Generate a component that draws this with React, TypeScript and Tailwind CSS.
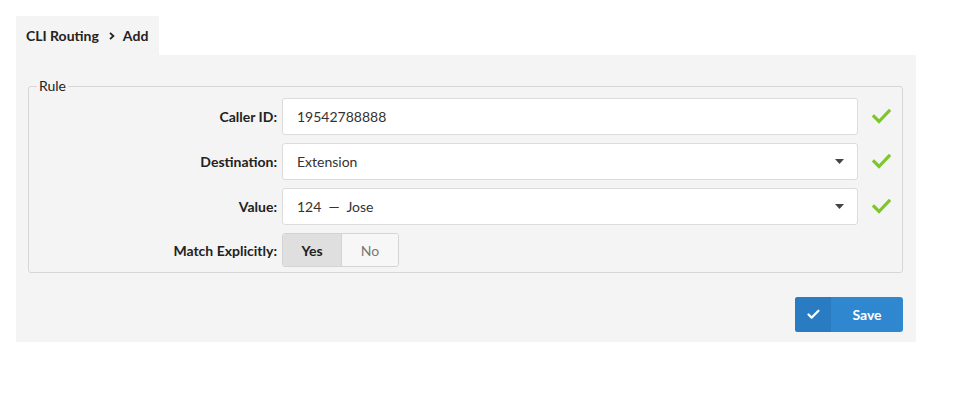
import { Check } from "lucide-react";

const font = { fontFamily: "Lato, 'Open Sans', sans-serif" };

function Caret() {
  return (
    <svg width="9" height="5" viewBox="0 0 9 5" className="absolute right-[13px] top-[15px]">
      <path d="M0 0 L9 0 L4.5 5 Z" fill="#444" />
    </svg>
  );
}

function Tick() {
  return (
    <svg width="19" height="15" viewBox="0 0 19 15" className="ml-[14px] shrink-0">
      <path d="M2 7.5 L7 12.5 L17 2" fill="none" stroke="#7dc72c" strokeWidth="3.2" strokeLinecap="square" />
    </svg>
  );
}

function Row({ label, children, tick = true }: { label: string; children: React.ReactNode; tick?: boolean }) {
  return (
    <div className="flex items-center">
      <div className="w-[248px] shrink-0 text-right text-[14px] font-bold text-[#222]">{label}</div>
      <div className="ml-[5px] w-[576px] shrink-0">{children}</div>
      {tick && <Tick />}
    </div>
  );
}

export default function App() {
  return (
    <div className="bg-white w-[961px] h-[409px] pt-4 pl-4" style={font}>
      <div className="inline-flex items-center h-[39px] w-[143px] bg-[#f4f4f4] pl-[10px] text-[14px] font-bold text-[#222]">
        CLI Routing
        <svg width="6" height="8" viewBox="0 0 6 8" className="ml-[10px] mr-[8px]">
          <path d="M1 0.8 L4.4 4 L1 7.2" fill="none" stroke="#222" strokeWidth="1.8" />
        </svg>
        Add
      </div>
      <div className="w-[900px] bg-[#f4f4f4] pt-[23px] pl-3 pr-[13px] pb-[10px]">
        <fieldset className="border border-[#d6d6d6] rounded-[3px] pb-[5px]">
          <legend className="ml-[8px] px-[2px] text-[14px] leading-4 text-[#222]">Rule</legend>
          <div className="flex flex-col gap-2 pt-1">
            <Row label="Caller ID:">
              <div className="h-[37px] bg-white border border-[#dcdcdc] rounded-[3px] flex items-center pl-[14px] text-[14px] text-[#333]">
                19542788888
              </div>
            </Row>
            <Row label="Destination:">
              <div className="relative h-[37px] bg-white border border-[#dcdcdc] rounded-[3px] flex items-center pl-[14px] text-[14px] text-[#333]">
                Extension
                <Caret />
              </div>
            </Row>
            <Row label="Value:">
              <div className="relative h-[37px] bg-white border border-[#dcdcdc] rounded-[3px] flex items-center pl-[14px] text-[14px] text-[#333]">
                124 &nbsp;—&nbsp; Jose
                <Caret />
              </div>
            </Row>
            <Row label="Match Explicitly:" tick={false}>
              <div className="inline-flex h-[34px] border border-[#d4d4d4] rounded-[3px] overflow-hidden text-[14px]">
                <div className="w-[59px] flex items-center justify-center bg-[#dfdfdf] font-bold text-[#222] border-r border-[#d4d4d4]">
                  Yes
                </div>
                <div className="w-[56px] flex items-center justify-center bg-[#f7f7f7] text-[#777]">No</div>
              </div>
            </Row>
          </div>
        </fieldset>
        <div className="flex justify-end mt-6">
          <button className="flex h-[35px] w-[108px] rounded-[3px] overflow-hidden bg-[#2f87d0] text-white text-[14px] font-bold">
            <span className="w-[36px] h-full flex items-center justify-center bg-[#2a7cc2]">
              <Check size={15} strokeWidth={3.5} />
            </span>
            <span className="flex-1 flex items-center justify-center">Save</span>
          </button>
        </div>
      </div>
    </div>
  );
}
